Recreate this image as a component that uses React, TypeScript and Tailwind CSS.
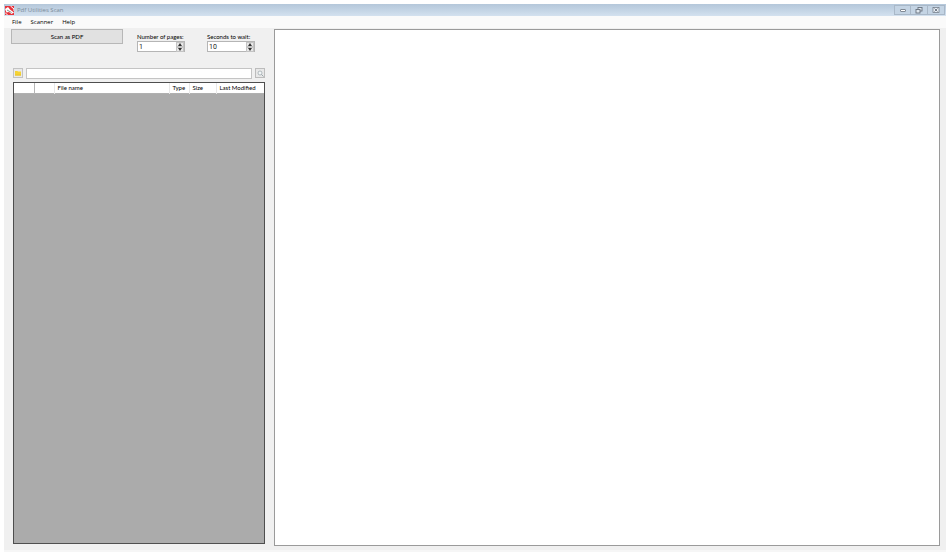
import { useState } from "react";

const menuItems = ["File", "Scanner", "Help"];

function AppLogo() {
  return (
    <svg className="h-[9px] w-[9px]" viewBox="0 0 18 18" aria-hidden="true">
      <rect width="18" height="18" fill="#e5323b" />
      <path d="M0 6 L6 2 L10 7 L18 13 L13 16 L8 12 L3 13 Z" fill="#fff" />
      <path d="M4 8 L13 13" stroke="#888" strokeWidth="2" />
      <path d="M11 0 L18 6 L18 10 M0 13 L5 18" stroke="#fff" strokeWidth="2" fill="none" />
    </svg>
  );
}

function TitleBar() {
  return (
    <header className="flex h-3 items-center justify-between bg-linear-to-b from-[#b4c7da] to-[#d3e1ef] pr-px pl-px">
      <div className="flex items-center gap-[3px]">
        <AppLogo />
        <h1 className="font-['Open_Sans',sans-serif] text-[6px] leading-2 text-[#7c8a98]">Pdf Utilities Scan</h1>
      </div>
      <div className="flex h-[10px] text-[#68727f]">
        <button aria-label="Minimize" className="flex w-[17px] items-center justify-center border border-[#a9b8c8] bg-[#c4d4e4]">
          <svg className="h-2 w-2" viewBox="0 0 8 8">
            <rect x="1.5" y="3.5" width="5" height="2" rx="0.5" fill="#fff" stroke="currentColor" strokeWidth="0.8" />
          </svg>
        </button>
        <button aria-label="Restore" className="flex w-[17px] items-center justify-center border border-l-0 border-[#a9b8c8] bg-[#c4d4e4]">
          <svg className="h-2 w-2" viewBox="0 0 8 8">
            <rect x="3" y="1.5" width="4" height="3.5" fill="#dfe7ef" stroke="currentColor" strokeWidth="0.9" />
            <rect x="1" y="3.5" width="4" height="3.5" fill="#dfe7ef" stroke="currentColor" strokeWidth="0.9" />
          </svg>
        </button>
        <button aria-label="Close" className="flex w-[17px] items-center justify-center border border-l-0 border-[#a9b8c8] bg-[#c4d4e4]">
          <svg className="h-2 w-2" viewBox="0 0 8 8">
            <rect x="1" y="1.5" width="6" height="5" fill="#e6edf4" stroke="currentColor" strokeWidth="0.7" />
            <path d="M2.5 2.5 L5.5 5.5 M5.5 2.5 L2.5 5.5" stroke="currentColor" strokeWidth="0.9" />
          </svg>
        </button>
      </div>
    </header>
  );
}

type SpinnerProps = {
  id: string;
  label: string;
  value: number;
  onChange: (value: number) => void;
};

function Spinner({ id, label, value, onChange }: SpinnerProps) {
  return (
    <div className="w-12">
      <label htmlFor={id} className="block h-2 text-[6px] leading-2 whitespace-nowrap">{label}</label>
      <div className="flex h-[11px] border border-[#b5b5b5] bg-white">
        <input
          id={id}
          type="text"
          inputMode="numeric"
          className="min-w-0 flex-1 pl-px font-['Roboto',sans-serif] text-[7px] leading-2 text-[#222] outline-none"
          value={value}
          onChange={(e) => onChange(Number(e.target.value) || 0)}
        />
        <div className="flex w-2 flex-col bg-[#e8e8e8]">
          <button aria-label={`${label} up`} className="flex flex-1 items-center justify-center border border-[#c4c4c4]" onClick={() => onChange(value + 1)}>
            <svg className="h-[3px] w-1" viewBox="0 0 4 3"><path d="M0 3 L2 0 L4 3 Z" fill="#333" /></svg>
          </button>
          <button aria-label={`${label} down`} className="flex flex-1 items-center justify-center border border-[#c4c4c4]" onClick={() => onChange(Math.max(0, value - 1))}>
            <svg className="h-[3px] w-1" viewBox="0 0 4 3"><path d="M0 0 L2 3 L4 0 Z" fill="#333" /></svg>
          </button>
        </div>
      </div>
    </div>
  );
}

function FileTable() {
  return (
    <div className="mt-[3px] ml-[2px] flex-1 border border-[#4e4e4e] bg-[#ababab]">
      <table className="w-full table-fixed border-collapse bg-white text-left text-[6px] leading-2">
        <colgroup>
          <col className="w-[20px]" />
          <col className="w-[20px]" />
          <col />
          <col className="w-[20px]" />
          <col className="w-[27px]" />
          <col className="w-[48px]" />
        </colgroup>
        <thead>
          <tr className="h-[10px] border-b border-[#b0b0b0] whitespace-nowrap">
            <th aria-label="Preview" className="border-r border-[#b5b5b5] p-0" />
            <th aria-label="Selected" className="border-r border-[#e8e8e8] p-0" />
            <th className="border-r border-[#e8e8e8] py-0 pr-0 pl-[3px] font-normal">File name</th>
            <th className="border-r border-[#e8e8e8] py-0 pr-0 pl-[3px] font-normal">Type</th>
            <th className="border-r border-[#e8e8e8] py-0 pr-0 pl-[3px] font-normal">Size</th>
            <th className="py-0 pr-0 pl-[3px] font-normal">Last Modified</th>
          </tr>
        </thead>
      </table>
    </div>
  );
}

function App() {
  const [pages, setPages] = useState(1);
  const [seconds, setSeconds] = useState(10);
  const [path, setPath] = useState("");

  return (
    <div className="h-screen bg-white p-1 font-['Lato',sans-serif] text-black">
      <div className="flex h-full flex-col border-b-2 border-[#f6f6f6] bg-[#f0f0f0]">
        <TitleBar />

        <nav className="flex h-3 items-center gap-[9px] bg-[#fafafa] pl-2 font-['Open_Sans',sans-serif] text-[6px] leading-2">
          {menuItems.map((item) => (
            <button key={item}>{item}</button>
          ))}
        </nav>

        <main className="flex min-h-0 flex-1 gap-[9px] pt-px pr-[6px] pb-1 pl-[7px]">
          <section className="flex w-[254px] shrink-0 flex-col pb-[2px]">
            {/* Scan controls */}
            <div className="flex h-[38px] items-start">
              <button className="h-[15px] w-28 border border-[#b7b7b7] bg-[#e1e1e1] text-[6px] leading-2">Scan as PDF</button>
              <div className="mt-1 ml-[14px] flex gap-[22px]">
                <Spinner id="pages" label="Number of pages:" value={pages} onChange={setPages} />
                <Spinner id="seconds" label="Seconds to wait:" value={seconds} onChange={setSeconds} />
              </div>
            </div>

            {/* Folder path */}
            <div className="ml-[2px] flex h-3 items-center gap-[3px]">
              <button aria-label="Open folder" className="flex h-[10px] w-[10px] items-center justify-center border border-[#c2c2c2] bg-[#eaeaea]">
                <svg className="h-[6px] w-[6px]" viewBox="0 0 6 6">
                  <path d="M0 1 H2.5 L3 1.5 H6 V5.5 H0 Z" fill="#f5d335" />
                  <path d="M0 5 H6" stroke="#e6c22a" />
                </svg>
              </button>
              <input
                type="text"
                aria-label="Folder path"
                className="h-[11px] min-w-0 flex-1 border border-[#c4c4c4] bg-white px-px text-[6px] outline-none"
                value={path}
                onChange={(e) => setPath(e.target.value)}
              />
              <button aria-label="Search" className="flex h-[10px] w-[10px] items-center justify-center border border-[#bcbcbc] bg-[#e8e8e8]">
                <svg className="h-[7px] w-[7px]" viewBox="0 0 7 7" fill="none" stroke="#98a4a8">
                  <circle cx="3" cy="3" r="2" fill="#f2f6f7" strokeWidth="0.7" />
                  <path d="M4.5 4.5 L6.5 6.5" />
                </svg>
              </button>
            </div>

            <FileTable />
          </section>

          <section aria-label="Preview" className="min-w-0 flex-1 border border-[#9a9a9a] bg-white" />
        </main>
      </div>
    </div>
  );
}

export default App;
